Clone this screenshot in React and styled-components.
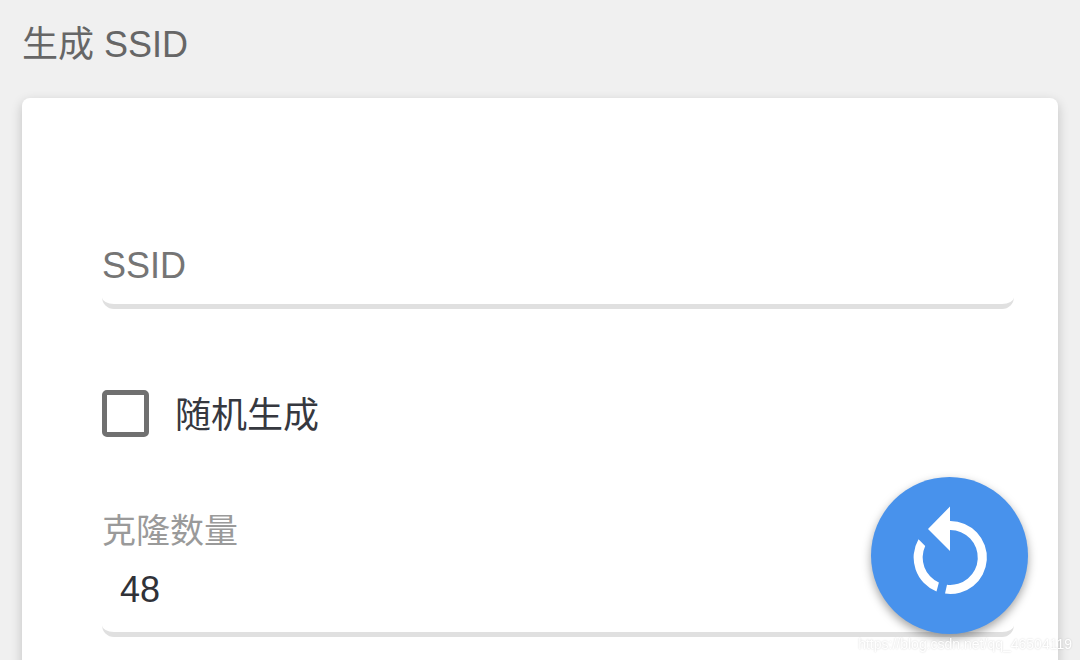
import React, { useState } from "react";
import styled, { createGlobalStyle } from "styled-components";

function App() {
  const [ssid, setSsid] = useState("");
  const [random, setRandom] = useState(false);
  const [count, setCount] = useState("48");

  return (
    <Page>
      <GlobalStyle />
      <Title>生成 SSID</Title>
      <Card>
        <TextInput
          aria-label="SSID"
          placeholder="SSID"
          value={ssid}
          onChange={(e) => setSsid(e.target.value)}
        />
        <CheckRow>
          <Checkbox
            type="checkbox"
            checked={random}
            onChange={(e) => setRandom(e.target.checked)}
          />
          随机生成
        </CheckRow>
        <Field>
          <FieldLabel htmlFor="count">克隆数量</FieldLabel>
          <TextInput
            id="count"
            $labelled
            inputMode="numeric"
            value={count}
            onChange={(e) => setCount(e.target.value)}
          />
        </Field>
      </Card>
      <Fab type="button" aria-label="重置">
        <ResetIcon viewBox="0 0 80 100" aria-hidden="true">
          <path d="M40 0.5 L18 23 L40 45 V24 A27.5 27.5 0 1 1 37 78.8 L35 87.6 A36.5 36.5 0 1 0 40 15 Z" />
          <path d="M8.5 33.3 A36.5 36.5 0 0 0 26.5 85.4 L28.9 76.6 A27.5 27.5 0 0 1 15.2 40 Z" />
        </ResetIcon>
      </Fab>
      <Watermark>https://blog.csdn.net/qq_46504119</Watermark>
    </Page>
  );
}

const GlobalStyle = createGlobalStyle`
  * {
    box-sizing: border-box;
  }
  body {
    margin: 0;
    background-color: #f0f0f0;
    font-family: "Liberation Sans", "Noto Sans CJK SC", sans-serif;
  }
`;

const Page = styled.main`
  height: 100vh;
  overflow: hidden;
  padding: 20px 22px 0;
`;

const Title = styled.h1`
  margin: 0 0 28px;
  font-size: 36px;
  line-height: 50px;
  font-weight: 400;
  color: #666;
`;

const Card = styled.section`
  display: flex;
  flex-direction: column;
  min-height: 100%;
  padding: 138px 44px 80px 80px;
  border-radius: 8px;
  background-color: #fff;
  box-shadow: 0 4px 12px rgba(0, 0, 0, 0.2);
`;

const TextInput = styled.input`
  width: 100%;
  height: 73px;
  padding: ${(props) => (props.$labelled ? "0 18px 16px" : "0 0 8px")};
  border: 0;
  border-bottom: 5px solid #e0e0e0;
  border-radius: 12px;
  background-color: transparent;
  font-family: inherit;
  font-size: 36px;
  color: #303238;
  outline: none;
  &::placeholder {
    color: #757575;
    opacity: 1;
  }
`;

const CheckRow = styled.label`
  display: flex;
  align-items: flex-start;
  align-self: flex-start;
  gap: 26px;
  margin-top: 81px;
  font-size: 36px;
  line-height: 52px;
  color: #36383f;
  cursor: pointer;
`;

const Checkbox = styled.input`
  appearance: none;
  width: 47px;
  height: 47px;
  margin: 0;
  border: 5px solid #707070;
  border-radius: 5px;
  &:checked {
    border-color: #4892ec;
    background-color: #4892ec;
  }
`;

const Field = styled.div`
  display: flex;
  flex-direction: column;
  gap: 9px;
  margin-top: 65px;
`;

const FieldLabel = styled.label`
  font-size: 34px;
  line-height: 48px;
  color: #9a9a9a;
`;

const Fab = styled.button`
  position: fixed;
  right: 52px;
  bottom: 26px;
  display: flex;
  align-items: center;
  justify-content: center;
  width: 157px;
  height: 157px;
  padding: 0;
  border: 0;
  border-radius: 50%;
  background-color: #4892ec;
  box-shadow: 0 4px 10px rgba(0, 0, 0, 0.36);
  cursor: pointer;
`;

const ResetIcon = styled.svg`
  width: 80px;
  height: 100px;
  fill: #fff;
`;

const Watermark = styled.span`
  position: fixed;
  right: 8px;
  bottom: 8px;
  font-size: 14px;
  line-height: 16px;
  color: #fff;
  text-shadow: 0 0 2px rgba(0, 0, 0, 0.2);
`;

export default App;
